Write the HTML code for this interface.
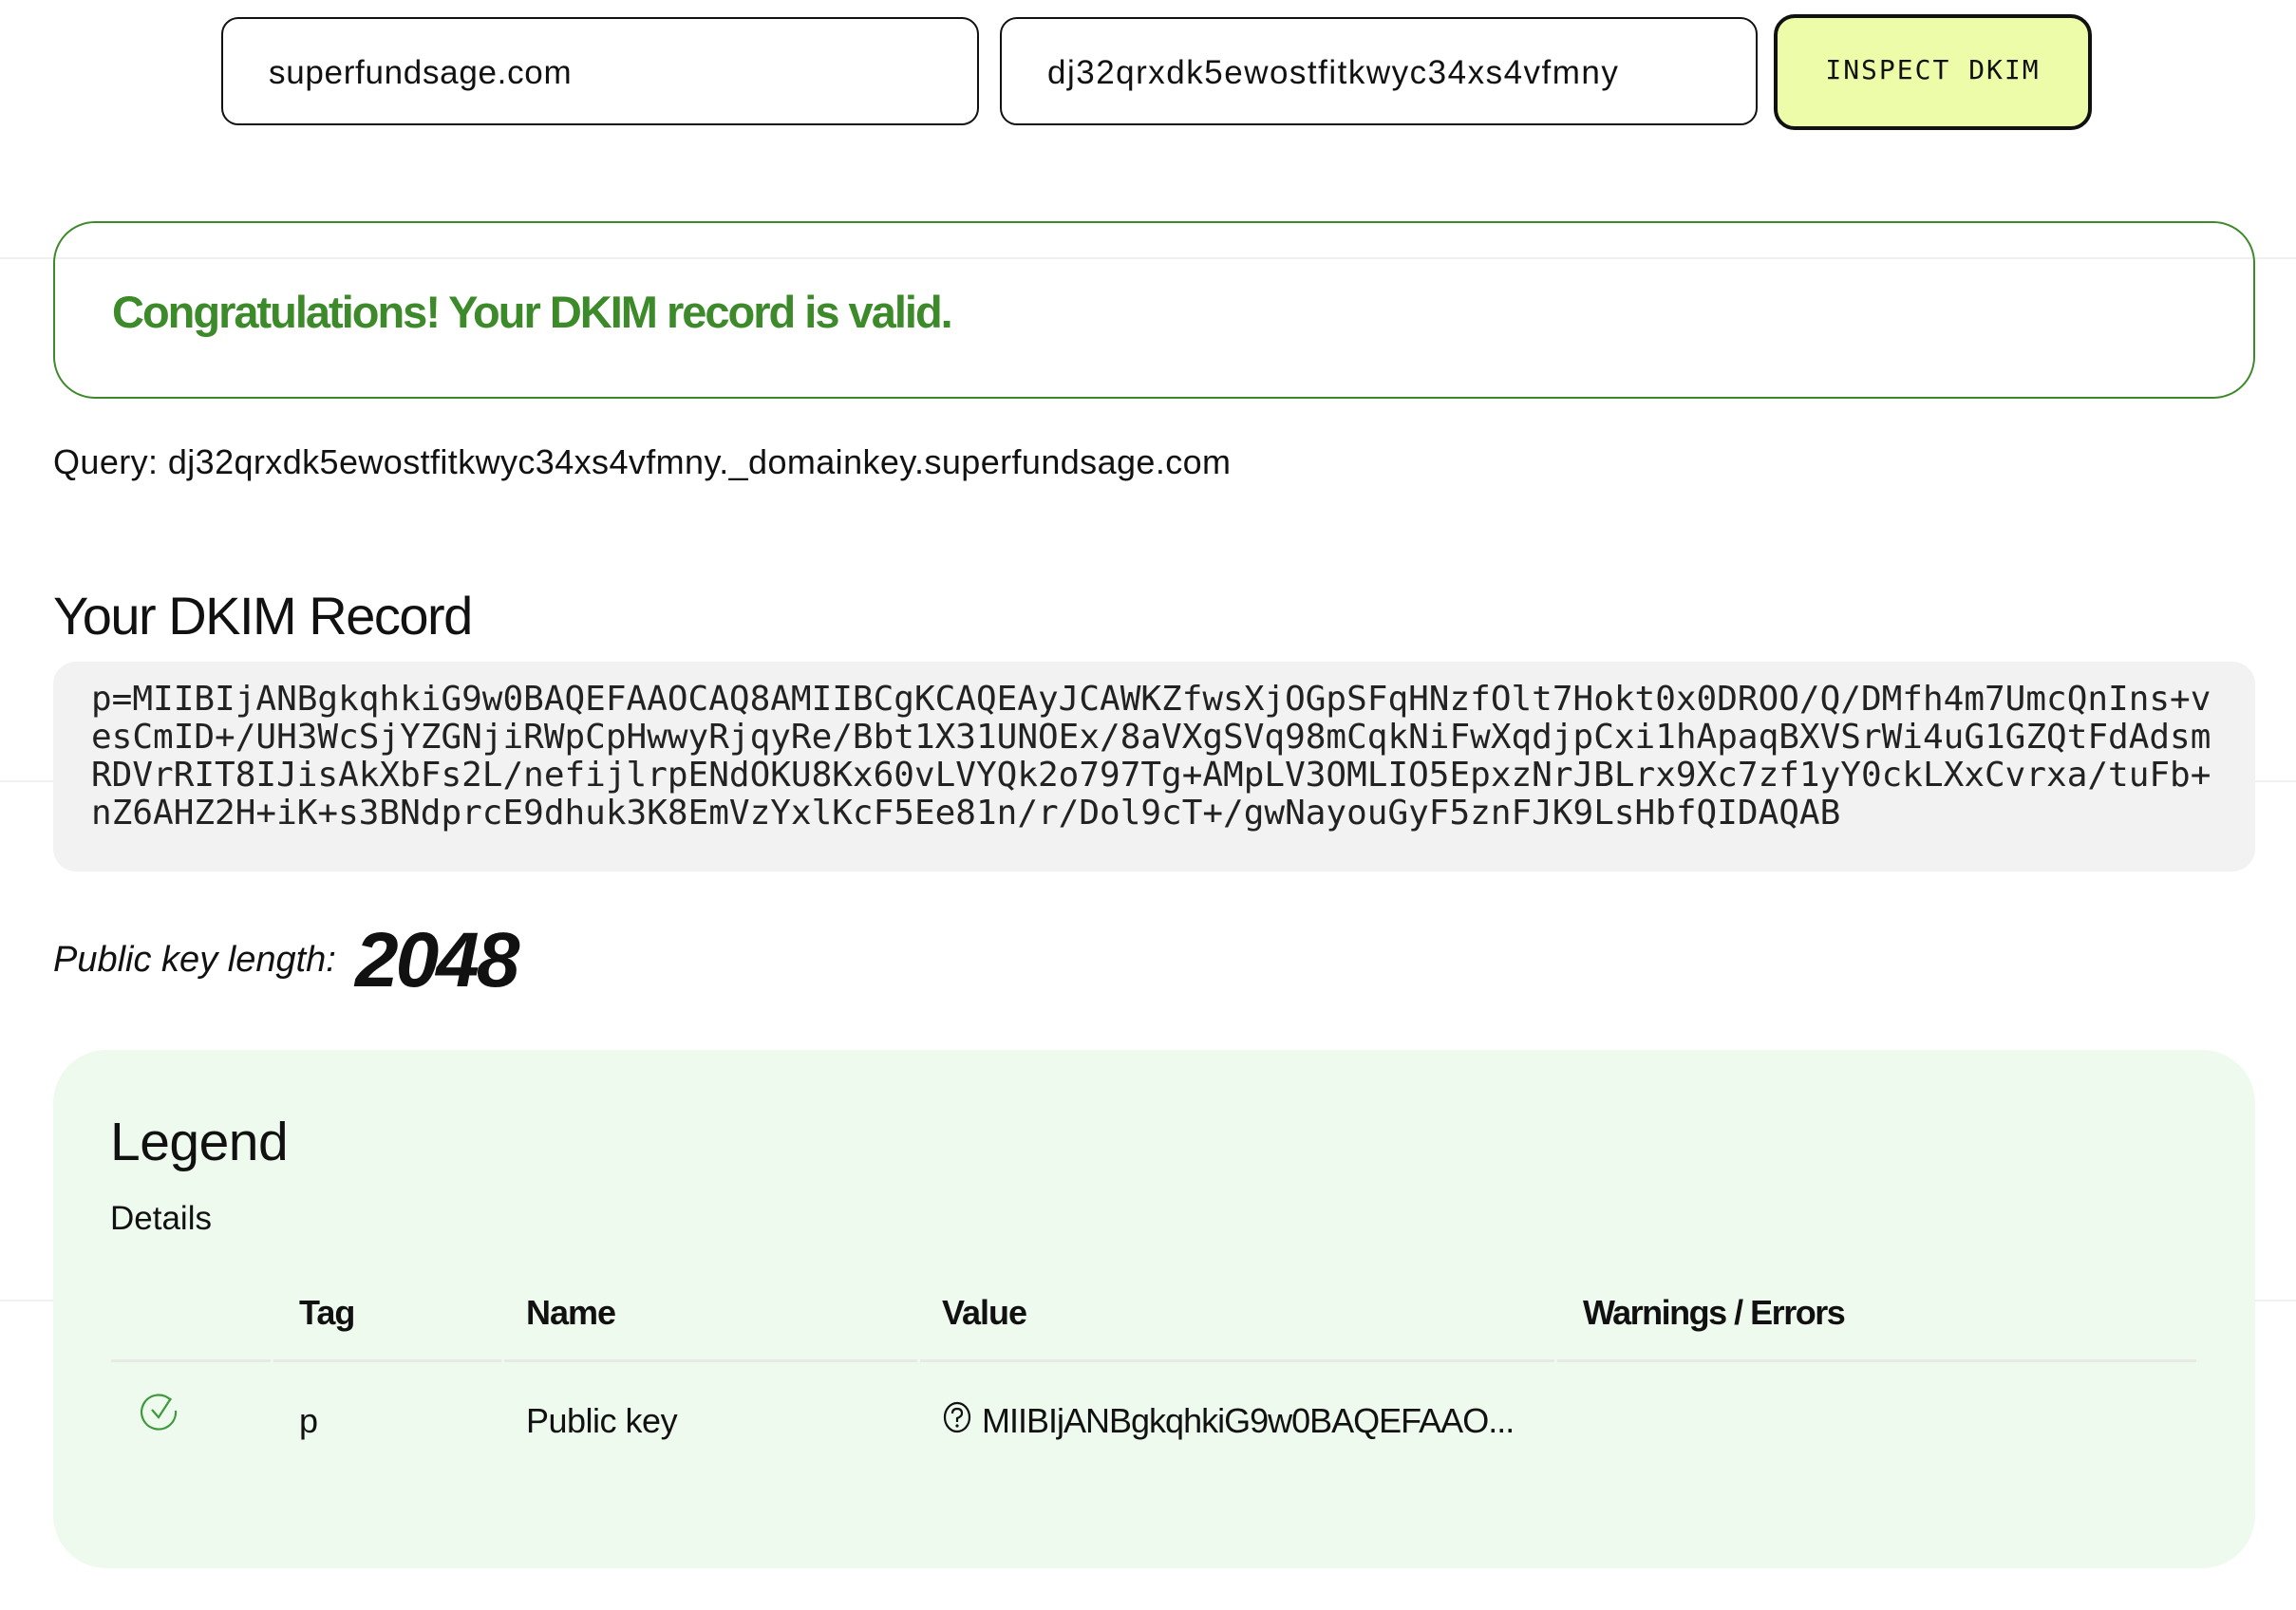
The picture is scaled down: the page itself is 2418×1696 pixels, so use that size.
<!DOCTYPE html>
<html><head><meta charset="utf-8"><style>
*{margin:0;padding:0;box-sizing:border-box}
body{width:2418px;height:1696px;background:#fff;position:relative;overflow:hidden;font-family:"Liberation Sans",sans-serif;color:#111}
.abs{position:absolute}
.hl{position:absolute;left:0;width:2418px;height:2px;background:#f0f0f0}
.inp{position:absolute;top:18px;height:114px;border:2px solid #111;border-radius:18px;font-size:35px;padding-left:48px;line-height:114px}
.btn{position:absolute;left:1868px;top:15px;width:335px;height:122px;background:#ecfca8;border:4px solid #111;border-radius:22px;font-family:"DejaVu Sans Mono","Liberation Mono",monospace;font-size:28px;letter-spacing:2px;text-align:center;line-height:110px}
.ok{position:absolute;left:56px;top:233px;width:2319px;height:187px;border:2px solid #3d8a2a;border-radius:44px}
.ok span{position:absolute;left:60px;top:66px;font-size:47px;color:#3d8a2a;letter-spacing:-2px;font-weight:bold}
.rec{position:absolute;left:56px;top:697px;width:2319px;height:221px;background:#f2f2f2;border-radius:24px}
.rec pre{position:absolute;left:40px;top:20px;font-family:"DejaVu Sans Mono",monospace;font-size:36px;line-height:40px;color:#222}
.leg{position:absolute;left:56px;top:1106px;width:2319px;height:546px;background:#eefaee;border-radius:56px}
.th{position:absolute;top:1362px;font-size:36px;font-weight:bold;letter-spacing:-1px}
.td{position:absolute;top:1476px;font-size:36px;letter-spacing:-0.5px}
.dv{position:absolute;top:1432px;height:3px;background:#e6e9e6}
</style></head><body>
<div class="hl" style="top:271px"></div>
<div class="hl" style="top:822px"></div>
<div class="hl" style="top:1369px"></div>
<div class="inp" style="left:233px;width:798px;letter-spacing:0.7px">superfundsage.com</div>
<div class="inp" style="left:1053px;width:798px;letter-spacing:1.5px">dj32qrxdk5ewostfitkwyc34xs4vfmny</div>
<div class="btn">INSPECT DKIM</div>
<div class="ok"><span>Congratulations! Your DKIM record is valid.</span></div>
<div class="abs" style="left:56px;top:466px;font-size:36px;letter-spacing:0.4px">Query: dj32qrxdk5ewostfitkwyc34xs4vfmny._domainkey.superfundsage.com</div>
<div class="abs" style="left:56px;top:616px;font-size:56px;letter-spacing:-1.5px">Your DKIM Record</div>
<div class="rec"><pre>p=MIIBIjANBgkqhkiG9w0BAQEFAAOCAQ8AMIIBCgKCAQEAyJCAWKZfwsXjOGpSFqHNzfOlt7Hokt0x0DROO/Q/DMfh4m7UmcQnIns+v
esCmID+/UH3WcSjYZGNjiRWpCpHwwyRjqyRe/Bbt1X31UNOEx/8aVXgSVq98mCqkNiFwXqdjpCxi1hApaqBXVSrWi4uG1GZQtFdAdsm
RDVrRIT8IJisAkXbFs2L/nefijlrpENdOKU8Kx60vLVYQk2o797Tg+AMpLV3OMLIO5EpxzNrJBLrx9Xc7zf1yY0ckLXxCvrxa/tuFb+
nZ6AHZ2H+iK+s3BNdprcE9dhuk3K8EmVzYxlKcF5Ee81n/r/Dol9cT+/gwNayouGyF5znFJK9LsHbfQIDAQAB</pre></div>
<div class="abs" style="left:56px;top:990px;font-size:38px;font-style:italic;letter-spacing:0px">Public key length:</div>
<div class="abs" style="left:374px;top:965px;font-size:82px;font-style:italic;font-weight:bold;letter-spacing:-3px">2048</div>
<div class="leg"></div>
<div class="abs" style="left:116px;top:1170px;font-size:57px;letter-spacing:-0.5px">Legend</div>
<div class="abs" style="left:116px;top:1264px;font-size:35px">Details</div>
<div class="th" style="left:315px">Tag</div>
<div class="th" style="left:554px">Name</div>
<div class="th" style="left:992px">Value</div>
<div class="th" style="left:1667px;letter-spacing:-1.5px">Warnings / Errors</div>
<div class="dv" style="left:117px;width:168px"></div>
<div class="dv" style="left:288px;width:240px"></div>
<div class="dv" style="left:531px;width:435px"></div>
<div class="dv" style="left:969px;width:668px"></div>
<div class="dv" style="left:1640px;width:673px"></div>
<svg class="abs" style="left:146px;top:1466px" width="44" height="44" viewBox="0 0 44 44"><path d="M34 9 A18 18 0 1 0 39 20" fill="none" stroke="#3d9a3a" stroke-width="2.2"/><path d="M14 19 L21 27 L34 7" fill="none" stroke="#3d9a3a" stroke-width="2.2"/></svg>
<div class="td" style="left:315px">p</div>
<div class="td" style="left:554px">Public key</div>
<svg class="abs" style="left:992px;top:1476px" width="32" height="34" viewBox="0 0 32 34"><ellipse cx="16" cy="17" rx="13" ry="15" fill="none" stroke="#111" stroke-width="2.2"/><path d="M11 13 Q11 8 16 8 Q21 8 21 13 Q21 16 16 18 L16 22" fill="none" stroke="#111" stroke-width="2.2"/><circle cx="16" cy="26" r="1.6" fill="#111"/></svg>
<div class="td" style="left:1034px;letter-spacing:-1px">MIIBIjANBgkqhkiG9w0BAQEFAAO...</div>
</body></html>
